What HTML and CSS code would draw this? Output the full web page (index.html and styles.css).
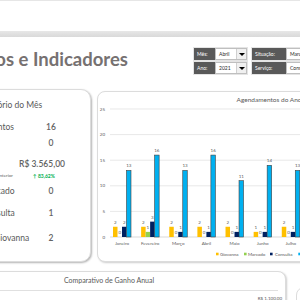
FILE: index.html
```html
<!DOCTYPE html>
<html lang="pt-BR">
<head>
<meta charset="utf-8">
<title>Agendamentos e Indicadores</title>
<link rel="stylesheet" href="styles.css">
</head>
<body>
<div class="page">
  <div class="topbar"></div>
  <div class="strip"></div>
  <header class="header">
    <div class="title-box"><h1 class="title">Agendamentos e Indicadores</h1></div>
    <div class="filters">
      <div class="filter"><span class="f-label">Mês:</span><span class="f-input"><span class="f-value">Abril</span><span class="f-arrow"></span></span></div>
      <div class="filter wide"><span class="f-label">Situação:</span><span class="f-input"><span class="f-value">Marcado</span><span class="f-arrow"></span></span></div>
      <div class="filter"><span class="f-label">Ano:</span><span class="f-input"><span class="f-value">2021</span><span class="f-arrow"></span></span></div>
      <div class="filter wide"><span class="f-label">Serviço:</span><span class="f-input"><span class="f-value">Consulta</span><span class="f-arrow"></span></span></div>
    </div>
  </header>

  <main class="row">
    <section class="card report">
      <h2 class="report-title">Relatório do Mês</h2>
      <span class="label">Agendamentos</span><span class="value">16</span>
      <span class="label">Faltas</span><span class="value">0</span>
      <span class="money">R$ 3.565,00</span>
      <span class="sub-label">Comparado ao mês anterior</span><span class="pct">↑ 83,62%</span>
      <span class="label">Totais Marcado</span><span class="value">0</span>
      <span class="label">Totais Consulta</span><span class="value">1</span>
      <span class="label">Dentista: Giovanna</span><span class="value">2</span>
    </section>

    <section class="card chart-card">
      <h2 class="chart-title">Agendamentos do Ano</h2>
      <svg class="chart" viewBox="0 0 342 153" width="342" height="153">
        <g transform="translate(-98 -108)">
          <g class="grid">
            <line x1="110" y1="109" x2="440" y2="109"/>
            <line x1="110" y1="134.6" x2="440" y2="134.6"/>
            <line x1="110" y1="160.2" x2="440" y2="160.2"/>
            <line x1="110" y1="185.8" x2="440" y2="185.8"/>
            <line x1="110" y1="211.4" x2="440" y2="211.4"/>
            <line class="base" x1="110" y1="237" x2="440" y2="237"/>
          </g>
          <g class="ax" text-anchor="end">
            <text x="105" y="110.6">25</text>
            <text x="105" y="136.2">20</text>
            <text x="105" y="161.8">15</text>
            <text x="105" y="187.4">10</text>
            <text x="105" y="213">5</text>
            <text x="105" y="238.6">0</text>
          </g>
          <g class="s-gio">
            <rect x="113" y="226.76" width="4.5" height="10.24"/>
            <rect x="141.13" y="226.76" width="4.5" height="10.24"/>
            <rect x="169.26" y="226.76" width="4.5" height="10.24"/>
            <rect x="197.39" y="226.76" width="4.5" height="10.24"/>
            <rect x="225.52" y="226.76" width="4.5" height="10.24"/>
            <rect x="253.65" y="231.88" width="4.5" height="5.12"/>
            <rect x="281.78" y="226.76" width="4.5" height="10.24"/>
          </g>
          <g class="s-mar">
            <rect x="145.63" y="231.88" width="4.5" height="5.12"/>
          </g>
          <g class="s-con">
            <rect x="122" y="226.76" width="4.5" height="10.24"/>
            <rect x="150.13" y="221.64" width="4.5" height="15.36"/>
            <rect x="178.26" y="231.88" width="4.5" height="5.12"/>
            <rect x="206.39" y="231.88" width="4.5" height="5.12"/>
            <rect x="234.52" y="231.88" width="4.5" height="5.12"/>
            <rect x="262.65" y="231.88" width="4.5" height="5.12"/>
            <rect x="290.78" y="231.88" width="4.5" height="5.12"/>
          </g>
          <g class="s-tot">
            <rect x="126.5" y="170.44" width="4.5" height="66.56"/>
            <rect x="154.63" y="155.08" width="4.5" height="81.92"/>
            <rect x="182.76" y="170.44" width="4.5" height="66.56"/>
            <rect x="210.89" y="155.08" width="4.5" height="81.92"/>
            <rect x="239.02" y="180.68" width="4.5" height="56.32"/>
            <rect x="267.15" y="165.32" width="4.5" height="71.68"/>
            <rect x="295.28" y="170.44" width="4.5" height="66.56"/>
          </g>
          <g class="dl" text-anchor="middle">
            <text x="115.25" y="223.76">2</text><text x="119.75" y="234">0</text><text x="124.25" y="223.76">2</text><text x="128.75" y="167.44">13</text>
            <text x="143.38" y="223.76">2</text><text x="147.88" y="228.88">1</text><text x="152.38" y="218.64">3</text><text x="156.88" y="152.08">16</text>
            <text x="171.51" y="223.76">2</text><text x="176.01" y="234">0</text><text x="180.51" y="228.88">1</text><text x="185.01" y="167.44">13</text>
            <text x="199.64" y="223.76">2</text><text x="204.14" y="234">0</text><text x="208.64" y="228.88">1</text><text x="213.14" y="152.08">16</text>
            <text x="227.77" y="223.76">2</text><text x="232.27" y="234">0</text><text x="236.77" y="228.88">1</text><text x="241.27" y="177.68">11</text>
            <text x="255.9" y="228.88">1</text><text x="260.4" y="234">0</text><text x="264.9" y="228.88">1</text><text x="269.4" y="162.32">14</text>
            <text x="284.03" y="223.76">2</text><text x="288.53" y="234">0</text><text x="293.03" y="228.88">1</text><text x="297.53" y="167.44">13</text>
          </g>
          <g class="ax" text-anchor="middle">
            <text x="122" y="244.5">Janeiro</text>
            <text x="150.13" y="244.5">Fevereiro</text>
            <text x="178.26" y="244.5">Março</text>
            <text x="206.39" y="244.5">Abril</text>
            <text x="234.52" y="244.5">Maio</text>
            <text x="262.65" y="244.5">Junho</text>
            <text x="290.78" y="244.5">Julho</text>
          </g>
          <g class="legend">
            <rect class="k-gio" x="216" y="252.7" width="2.6" height="2.6"/><text x="220" y="255.6">Giovanna</text>
            <rect class="k-mar" x="244" y="252.7" width="2.6" height="2.6"/><text x="248" y="255.6">Marcado</text>
            <rect class="k-con" x="270" y="252.7" width="2.6" height="2.6"/><text x="275" y="255.6">Consulta</text>
            <rect class="k-tot" x="298.3" y="252.7" width="2.6" height="2.6"/><text x="302" y="255.6">Total</text>
          </g>
        </g>
      </svg>
    </section>
  </main>

  <div class="row bottom">
    <section class="card compare">
      <h2 class="compare-title">Comparativo de Ganho Anual</h2>
      <div class="compare-rule"></div>
      <div class="compare-axis">R$ 1.100,00</div>
    </section>
    <section class="card side"></section>
  </div>
</div>
</body>
</html>
```

FILE: styles.css
```css
* {
  box-sizing: border-box;
  margin: 0;
  padding: 0;
}

body {
  width: 300px;
  height: 300px;
  overflow: hidden;
  background: #ffffff;
  font-family: Lato, "Open Sans", sans-serif;
  color: #595959;
}

.page {
  width: 520px;
  margin-left: -68px;
}

.topbar {
  height: 31px;
  border-top: 1px solid #e6e6e6;
  background: #ffffff;
}

.strip {
  height: 6px;
  background: linear-gradient(#e7e7e7, #d9d9d9);
}

.header {
  display: flex;
  height: 52px;
}

.title-box {
  width: 196px;
  display: flex;
  justify-content: flex-end;
  padding-top: 12px;
}

.title {
  flex-shrink: 0;
  white-space: nowrap;
  font-size: 18.5px;
  line-height: 20px;
  font-weight: 700;
  color: #767171;
}

.filters {
  margin-left: 66px;
  margin-top: 11px;
  display: grid;
  grid-template-columns: 53px 80px;
  column-gap: 5px;
  row-gap: 2px;
  align-content: start;
}

.filter {
  display: flex;
  height: 12px;
  box-shadow: 0 0 0 1px #e4e4e4;
}

.f-label {
  width: 21px;
  background: #595959;
  color: #ffffff;
  font-size: 5px;
  line-height: 12px;
  padding-left: 3px;
}

.filter.wide .f-label {
  width: 34px;
}

.f-input {
  flex: 1;
  display: flex;
  background: #ffffff;
  border: 1px solid #bfbfbf;
}

.f-value {
  flex: 1;
  font-size: 5px;
  line-height: 10px;
  padding-left: 3px;
  color: #262626;
}

.f-arrow {
  width: 10px;
  background: #f0f0f0;
  border-left: 1px solid #d0d0d0;
  display: flex;
  align-items: center;
  justify-content: center;
}

.f-arrow::before {
  content: "";
  border-left: 3px solid transparent;
  border-right: 3px solid transparent;
  border-top: 3px solid #000000;
}

.row {
  display: flex;
  gap: 6px;
  align-items: flex-start;
}

.card {
  background: #ffffff;
  border: 1px solid #dcdcdc;
  flex-shrink: 0;
}

.report {
  width: 159px;
  height: 173px;
  border-radius: 10px;
  box-shadow: 1px 1px 2px rgba(0, 0, 0, 0.3);
  padding: 4px 19px 0 25px;
  display: grid;
  grid-template-columns: 1fr 40px;
  grid-template-rows: 22px 22px 10px 22px 12px 18px 26px 24px;
  align-items: center;
  font-size: 8.5px;
  line-height: 12px;
}

.report-title {
  grid-column: 1 / -1;
  text-align: center;
  padding-right: 8px;
  font-size: 8.5px;
  font-weight: 400;
}

.label {
  white-space: nowrap;
}

.value {
  text-align: center;
  font-weight: 600;
  color: #636363;
}

.money {
  grid-column: 1 / -1;
  justify-self: end;
  align-self: end;
  margin-right: 6px;
  font-weight: 600;
  color: #636363;
}

.sub-label {
  font-size: 4.5px;
  text-align: right;
  padding-right: 18px;
  white-space: nowrap;
}

.pct {
  justify-self: start;
  margin-left: 2px;
  font-size: 5px;
  font-weight: 700;
  color: #00b050;
  white-space: nowrap;
}

.chart-card {
  width: 344px;
  height: 171px;
  margin-top: 2px;
  border-radius: 8px;
  box-shadow: 1px 1px 2px rgba(0, 0, 0, 0.2);
}

.chart-title {
  font-size: 6.5px;
  font-weight: 400;
  line-height: 16px;
  text-align: center;
}

.chart {
  display: block;
}

.grid line {
  stroke: #d9d9d9;
  stroke-width: 0.6;
}

.grid line.base {
  stroke: #bfbfbf;
}

.ax,
.dl,
.legend text {
  font-family: Lato, sans-serif;
  font-size: 4.5px;
  fill: #595959;
}

.s-gio rect,
.k-gio {
  fill: #ffc000;
}

.s-mar rect,
.k-mar {
  fill: #92d050;
}

.s-con rect,
.k-con {
  fill: #002060;
}

.s-tot rect,
.k-tot {
  fill: #00b0f0;
}

.s-tot rect {
  stroke: #404040;
  stroke-width: 0.6;
}

.bottom {
  margin-top: 9px;
  gap: 10px;
}

.compare {
  width: 354px;
  height: 60px;
  border-radius: 8px;
  box-shadow: 1px 1px 2px rgba(0, 0, 0, 0.2);
}

.compare-title {
  font-size: 7px;
  font-weight: 400;
  line-height: 16px;
  text-align: center;
}

.compare-rule {
  margin: 2px 7px 0;
  border-top: 1px solid #e0e0e0;
}

.compare-axis {
  margin-top: 5px;
  padding-right: 3px;
  text-align: right;
  font-size: 4.5px;
  line-height: 6px;
}

.side {
  width: 200px;
  height: 60px;
  margin-top: 16px;
  border-radius: 8px;
}
```
